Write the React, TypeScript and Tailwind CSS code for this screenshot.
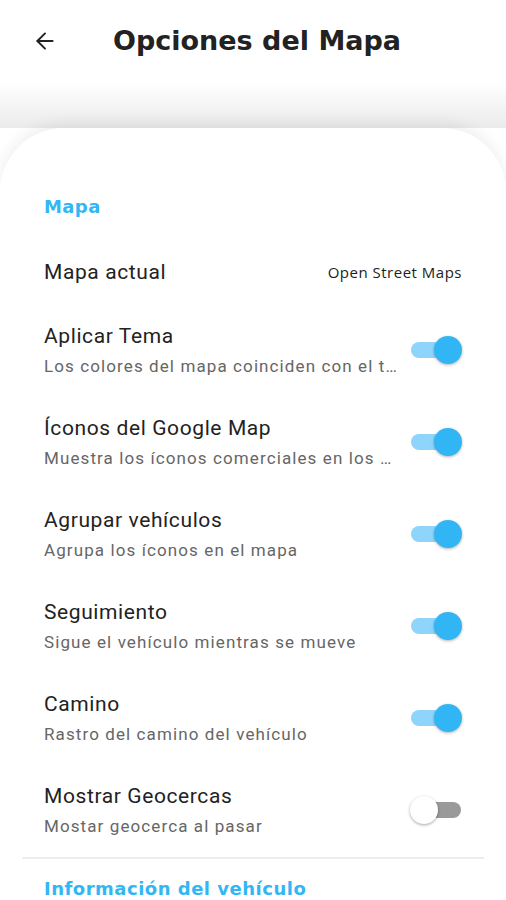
import { ArrowLeft } from "lucide-react";

type Opt = { title: string; sub: string; on: boolean };

const options: Opt[] = [
  { title: "Aplicar Tema", sub: "Los colores del mapa coinciden con el tema de la aplicación", on: true },
  { title: "Íconos del Google Map", sub: "Muestra los íconos comerciales en los mapas de Google", on: true },
  { title: "Agrupar vehículos", sub: "Agrupa los íconos en el mapa", on: true },
  { title: "Seguimiento", sub: "Sigue el vehículo mientras se mueve", on: true },
  { title: "Camino", sub: "Rastro del camino del vehículo", on: true },
  { title: "Mostrar Geocercas", sub: "Mostar geocerca al pasar", on: false },
];

function Toggle({ on }: { on: boolean }) {
  return (
    <div className="relative h-[28px] w-[52px] shrink-0">
      <div
        className={
          on
            ? "absolute left-[1px] top-[6px] h-[16px] w-[38px] rounded-full bg-[#8fd5fb]"
            : "absolute left-[13px] top-[6px] h-[16px] w-[38px] rounded-full bg-[#9a9a9a]"
        }
      />
      <div
        className={
          on
            ? "absolute left-[24px] top-0 h-[28px] w-[28px] rounded-full bg-[#32b5f5] shadow-[0_1px_3px_rgba(0,0,0,0.3)]"
            : "absolute left-0 top-0 h-[28px] w-[28px] rounded-full bg-white shadow-[0_1px_3px_rgba(0,0,0,0.35)]"
        }
      />
    </div>
  );
}

export default function App() {
  return (
    <div className="min-h-screen w-[506px] overflow-hidden bg-white font-['Roboto',sans-serif]">
      <header className="flex h-[82px] items-center pl-[32px]">
        <ArrowLeft className="h-[26px] w-[26px] text-[#222]" strokeWidth={1.8} />
        <h1 className="ml-[55px] font-['DejaVu_Sans',sans-serif] text-[27px] font-bold text-[#222]">
          Opciones del Mapa
        </h1>
      </header>

      <div className="h-[46px] bg-gradient-to-b from-white to-[#ebebeb]" />

      <main className="rounded-t-[64px] bg-white shadow-[0_-6px_14px_rgba(0,0,0,0.06)]">
        <div className="px-[44px] pt-[67px]">
          <h2 className="font-['DejaVu_Sans',sans-serif] text-[18px] font-bold leading-[24px] tracking-[0.4px] text-[#33b6f4]">
            Mapa
          </h2>

          <div className="mt-[39px] flex items-center justify-between">
            <span className="text-[21px] leading-[28px] tracking-[0.6px] text-[#222]">Mapa actual</span>
            <span className="font-['Open_Sans',sans-serif] text-[15px] font-medium tracking-[0.5px] text-[#222]">
              Open Street Maps
            </span>
          </div>

          <div className="mt-[36px] flex flex-col gap-[36px]">
            {options.map((o) => (
              <div key={o.title} className="flex items-center justify-between gap-[7px]">
                <div className="min-w-0 flex-1">
                  <div className="text-[21px] leading-[28px] tracking-[0.6px] text-[#222]">{o.title}</div>
                  <div className="mt-[4px] truncate text-[17px] leading-[24px] tracking-[1.1px] text-[#666]">{o.sub}</div>
                </div>
                <Toggle on={o.on} />
              </div>
            ))}
          </div>
        </div>

        <div className="mx-[22px] mt-[19px] h-[2px] bg-[#ececec]" />

        <h2 className="px-[44px] pt-[18px] font-['DejaVu_Sans',sans-serif] text-[18px] font-bold leading-[24px] tracking-[0.5px] text-[#33b6f4]">
          Información del vehículo
        </h2>
      </main>
    </div>
  );
}
